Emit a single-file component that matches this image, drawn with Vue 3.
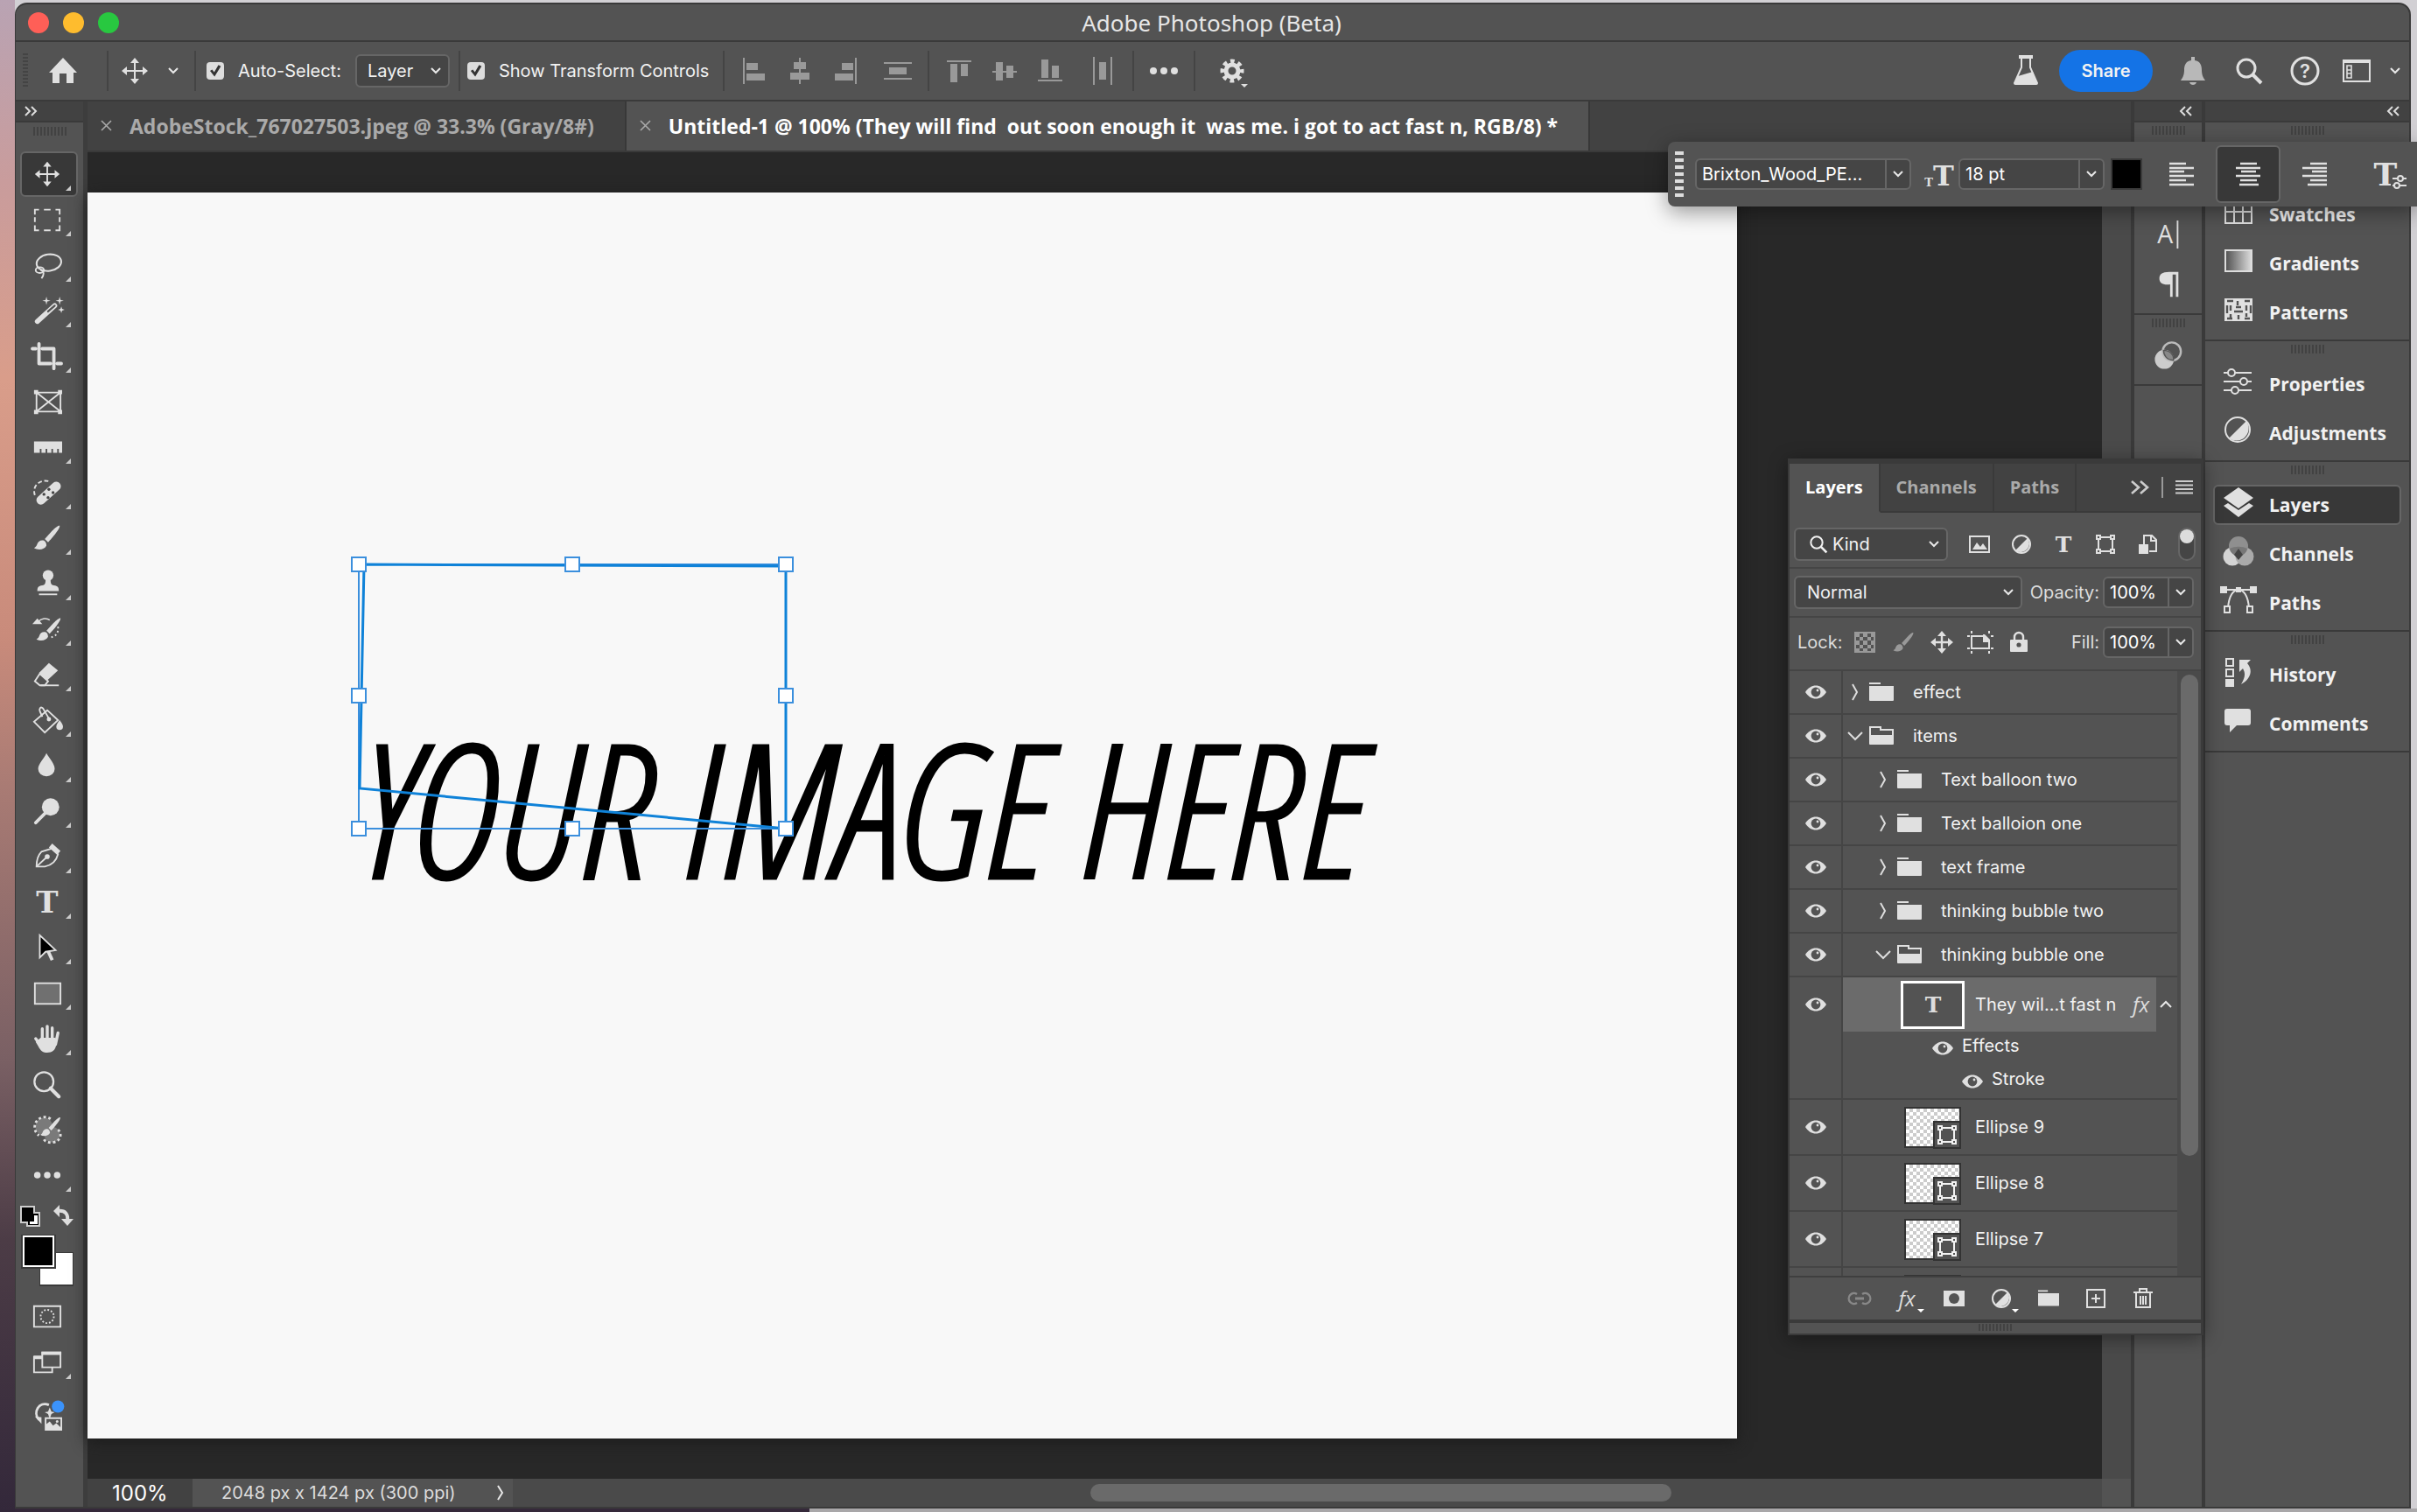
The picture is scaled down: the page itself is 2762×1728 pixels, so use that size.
<template>
  <div class="desktop">
    <div class="window">
      <!-- title bar -->
      <header class="titlebar">
        <div class="lights">
          <button class="light red" aria-label="Close"></button>
          <button class="light yellow" aria-label="Minimise"></button>
          <button class="light green" aria-label="Zoom"></button>
        </div>
        <h1>Adobe Photoshop (Beta)</h1>
        <div class="lights-spacer"></div>
      </header>

      <!-- options bar -->
      <div class="options">
        <span class="vgrip"></span>
        <div class="group home">
          <button class="icon-btn" aria-label="Home"><svg viewBox="0 0 36 36" v-html="icons.home"></svg></button>
        </div>
        <div class="group current">
          <svg class="icon" viewBox="0 0 36 36" v-html="icons.move"></svg>
          <button class="chev-btn" aria-label="Tool presets"><svg class="chev" viewBox="0 0 16 16" v-html="icons.down"></svg></button>
        </div>
        <div class="group auto">
          <input id="auto" type="checkbox" class="check" v-model="autoSelect">
          <label for="auto">Auto-Select:</label>
          <span class="select layer-select">
            <select aria-label="Auto-select target"><option>Layer</option></select>
            <svg class="chev" viewBox="0 0 16 16" v-html="icons.down"></svg>
          </span>
        </div>
        <div class="group transform">
          <input id="controls" type="checkbox" class="check" v-model="showControls">
          <label for="controls">Show Transform Controls</label>
        </div>
        <div v-for="(set, i) in alignSets" :key="i" class="group aligns">
          <button v-for="name in set" :key="name" class="icon-btn dim" :aria-label="name">
            <svg viewBox="0 0 36 36" v-html="icons[name]"></svg>
          </button>
        </div>
        <div class="group more">
          <button class="icon-btn" aria-label="More"><svg viewBox="0 0 36 36" v-html="icons.dots"></svg></button>
        </div>
        <button class="icon-btn gear" aria-label="Settings"><svg viewBox="0 0 36 36" v-html="icons.gear"></svg></button>

        <div class="account">
          <button class="icon-btn" aria-label="Beta feedback"><svg viewBox="0 0 36 36" v-html="icons.flask"></svg></button>
          <button class="share">Share</button>
          <button class="icon-btn bell" aria-label="Notifications"><svg viewBox="0 0 36 36" v-html="icons.bell"></svg></button>
          <button class="icon-btn" aria-label="Search"><svg viewBox="0 0 36 36" v-html="icons.search"></svg></button>
          <button class="icon-btn" aria-label="Help"><svg viewBox="0 0 36 36" v-html="icons.help"></svg></button>
          <button class="icon-btn space" aria-label="Workspace"><svg viewBox="0 0 36 36" v-html="icons.workspace"></svg></button>
          <svg class="chev" viewBox="0 0 16 16" v-html="icons.down"></svg>
        </div>
      </div>

      <div class="body">
        <!-- tools -->
        <aside class="tools">
          <div class="dock-head"><svg class="double" viewBox="0 0 16 16" v-html="icons.right2"></svg></div>
          <span class="grip"></span>
          <nav class="tool-list">
            <button
              v-for="tool in tools"
              :key="tool.name"
              :class="['tool', { active: tool.name === currentTool, corner: tool.more }]"
              :aria-label="tool.name"
              @click="currentTool = tool.name"
            >
              <svg viewBox="0 0 36 36" v-html="icons[tool.name]"></svg>
            </button>
          </nav>
          <div class="colors">
            <svg viewBox="0 0 76 100" v-html="icons.colors"></svg>
          </div>
          <button class="tool" aria-label="Quick mask"><svg viewBox="0 0 36 36" v-html="icons.quickmask"></svg></button>
          <button class="tool corner" aria-label="Screen mode"><svg viewBox="0 0 36 36" v-html="icons.screen"></svg></button>
          <button class="tool gen" aria-label="Generate image"><svg viewBox="0 0 36 36" v-html="icons.generate"></svg></button>
        </aside>

        <!-- document -->
        <main class="document">
          <div class="tabs">
            <button v-for="doc in docs" :key="doc.title" :class="['tab', { active: doc.active }]">
              <svg class="close" viewBox="0 0 16 16" v-html="icons.close"></svg>
              <span>{{ doc.title }}</span>
            </button>
          </div>
          <div class="viewport">
            <div class="stage">
              <div class="artboard">
                <p class="headline">YOUR IMAGE HERE</p>
                <svg v-if="showControls" class="transform-box" viewBox="0 0 510 324">
                  <g fill="none" stroke="#3b8fdd" stroke-width="2">
                    <path d="M10 10H498V312H10Z" />
                    <path stroke="#0f82d8" stroke-width="3" d="M16 10L498 12V312M16 10L11 266L498 312" />
                    <rect v-for="h in handles" :key="h.join()" :x="h[0] - 8" :y="h[1] - 8" width="16" height="16" fill="#fff" />
                  </g>
                </svg>
              </div>
            </div>
            <div class="vscroll"></div>
          </div>
          <footer class="status">
            <span class="zoom">100%</span>
            <span class="info">
              2048 px x 1424 px (300 ppi)
              <svg class="chev" viewBox="0 0 16 16" v-html="icons.next"></svg>
            </span>
            <span class="hscroll"><span class="hthumb"></span></span>
            <span class="scroll-corner"></span>
          </footer>
        </main>

        <!-- collapsed docks -->
        <aside class="dock narrow">
          <div class="dock-head end"><svg class="double" viewBox="0 0 16 16" v-html="icons.left2"></svg></div>
          <section class="type-panels">
            <span class="grip"></span>
            <button class="mini" aria-label="Character"><svg viewBox="0 0 36 36" v-html="icons.character"></svg></button>
            <button class="mini" aria-label="Paragraph"><svg viewBox="0 0 36 36" v-html="icons.paragraph"></svg></button>
          </section>
          <section>
            <span class="grip"></span>
            <button class="mini" aria-label="Libraries"><svg viewBox="0 0 36 36" v-html="icons.circles"></svg></button>
          </section>
        </aside>
        <aside class="dock wide">
          <div class="dock-head end"><svg class="double" viewBox="0 0 16 16" v-html="icons.left2"></svg></div>
          <section v-for="(section, i) in panels" :key="i" :class="{ first: i === 0 }">
            <span class="grip"></span>
            <button
              v-for="panel in section"
              :key="panel"
              :class="['panel-btn', { active: panel === currentPanel }]"
              @click="currentPanel = panel"
            >
              <svg viewBox="0 0 36 36" v-html="icons[panel]"></svg>
              <span>{{ panel }}</span>
            </button>
          </section>
        </aside>
      </div>

      <!-- layers panel -->
      <section class="layers">
        <div class="layer-tabs">
          <button v-for="tab in layerTabs" :key="tab" :class="{ active: tab === 'Layers' }">{{ tab }}</button>
          <div class="panel-menu">
            <svg class="collapse" viewBox="0 0 24 24" v-html="icons.collapse"></svg>
            <span class="bar"></span>
            <svg class="burger" viewBox="0 0 24 24" v-html="icons.burger"></svg>
          </div>
        </div>
        <div class="row kind">
          <span class="select kind-select">
            <svg class="lens" viewBox="0 0 36 36" v-html="icons.search"></svg>
            <select aria-label="Filter type"><option>Kind</option></select>
            <svg class="chev" viewBox="0 0 16 16" v-html="icons.down"></svg>
          </span>
          <div class="filters">
            <button v-for="f in filters" :key="f" class="small-btn" :aria-label="f">
              <svg viewBox="0 0 24 24" v-html="icons[f]"></svg>
            </button>
          </div>
          <button class="toggle" aria-label="Filter on or off"></button>
        </div>
        <div class="row blend">
          <span class="select blend-select">
            <select aria-label="Blend mode"><option>Normal</option></select>
            <svg class="chev" viewBox="0 0 16 16" v-html="icons.down"></svg>
          </span>
          <label for="opacity">Opacity:</label>
          <span class="combo percent">
            <input id="opacity" type="text" v-model="opacity">
            <button aria-label="Opacity slider"><svg class="chev" viewBox="0 0 16 16" v-html="icons.down"></svg></button>
          </span>
        </div>
        <div class="row lock">
          <span class="lock-label">Lock:</span>
          <div class="locks">
            <button v-for="l in locks" :key="l" class="small-btn" :aria-label="l">
              <svg viewBox="0 0 24 24" v-html="icons[l]"></svg>
            </button>
          </div>
          <label for="fill">Fill:</label>
          <span class="combo percent">
            <input id="fill" type="text" v-model="fill">
            <button aria-label="Fill slider"><svg class="chev" viewBox="0 0 16 16" v-html="icons.down"></svg></button>
          </span>
        </div>

        <div class="list-wrap">
          <ul class="list">
            <li v-for="layer in layers" :key="layer.name" :class="['layer', layer.type, { nested: layer.nested }]">
              <button class="eye-cell" :aria-label="'Toggle ' + layer.name"><svg class="eye" viewBox="0 0 24 16" v-html="icons.eye"></svg></button>
              <div v-if="layer.type === 'folder'" class="layer-main">
                <svg class="arrow" viewBox="0 0 20 20" v-html="layer.open ? icons.open : icons.shut"></svg>
                <svg class="folder-icon" viewBox="0 0 28 24" v-html="layer.open ? icons.folderOpen : icons.folder"></svg>
                <span>{{ layer.name }}</span>
              </div>
              <div v-else-if="layer.type === 'text'" class="text-layer">
                <div class="text-head">
                  <div class="selected">
                    <span class="text-thumb"><svg viewBox="0 0 24 24" v-html="icons.letter"></svg></span>
                    <span class="name">{{ layer.name }}</span>
                    <i class="fx">fx</i>
                  </div>
                  <svg class="chev" viewBox="0 0 16 16" v-html="icons.up"></svg>
                </div>
                <div class="effect"><svg class="eye" viewBox="0 0 24 16" v-html="icons.eye"></svg>Effects</div>
                <div class="effect sub"><svg class="eye" viewBox="0 0 24 16" v-html="icons.eye"></svg>Stroke</div>
              </div>
              <div v-else class="layer-main">
                <span class="thumb"><span class="badge"><svg viewBox="0 0 24 24" v-html="icons.shape"></svg></span></span>
                <span>{{ layer.name }}</span>
              </div>
            </li>
            <li class="layer shape">
              <span class="eye-cell"></span>
              <div class="layer-main"><span class="thumb"></span></div>
            </li>
          </ul>
          <div class="track"><span class="thumb-bar"></span></div>
        </div>

        <div class="layer-actions">
          <button class="small-btn faint" aria-label="Link layers"><svg viewBox="0 0 24 24" v-html="icons.link"></svg></button>
          <button class="small-btn fx-btn menu" aria-label="Layer style"><i class="fx">fx</i></button>
          <button class="small-btn" aria-label="Add mask"><svg viewBox="0 0 24 24" v-html="icons.mask"></svg></button>
          <button class="small-btn menu" aria-label="Adjustment layer"><svg viewBox="0 0 24 24" v-html="icons.half"></svg></button>
          <button class="small-btn" aria-label="New group"><svg viewBox="0 0 28 24" v-html="icons.folder"></svg></button>
          <button class="small-btn" aria-label="New layer"><svg viewBox="0 0 24 24" v-html="icons.plus"></svg></button>
          <button class="small-btn" aria-label="Delete layer"><svg viewBox="0 0 24 24" v-html="icons.trash"></svg></button>
        </div>
        <div class="resize"><span class="grip"></span></div>
      </section>
    </div>

    <!-- contextual type bar -->
    <div class="typebar">
      <span class="handle"></span>
      <span class="combo font">
        <input type="text" aria-label="Font family" v-model="font">
        <button aria-label="Font list"><svg class="chev" viewBox="0 0 16 16" v-html="icons.down"></svg></button>
      </span>
      <svg class="icon tt" viewBox="0 0 32 36" v-html="icons.size"></svg>
      <span class="combo size">
        <input type="text" aria-label="Font size" v-model="size">
        <button aria-label="Size list"><svg class="chev" viewBox="0 0 16 16" v-html="icons.down"></svg></button>
      </span>
      <button class="swatch" aria-label="Text colour"></button>
      <button class="para" aria-label="Align left"><svg viewBox="0 0 36 36" v-html="icons.textLeft"></svg></button>
      <button class="para active" aria-label="Align centre"><svg viewBox="0 0 36 36" v-html="icons.textCenter"></svg></button>
      <button class="para" aria-label="Align right"><svg viewBox="0 0 36 36" v-html="icons.textRight"></svg></button>
      <button class="para last" aria-label="Type settings"><svg viewBox="0 0 40 36" v-html="icons.typeSettings"></svg></button>
    </div>
  </div>
</template>

<script setup>
import { ref } from "vue";

//state
const autoSelect = ref(true);
const showControls = ref(true);
const currentTool = ref("move");
const currentPanel = ref("Layers");
const opacity = ref("100%");
const fill = ref("100%");
const font = ref("Brixton_Wood_PE...");
const size = ref("18 pt");

const docs = [
  { title: "AdobeStock_767027503.jpeg @ 33.3% (Gray/8#)", active: false },
  { title: "Untitled-1 @ 100% (They will find  out soon enough it  was me. i got to act fast n, RGB/8) *", active: true },
];

const alignSets = [
  ["alignLeft", "alignCenter", "alignRight", "distributeV"],
  ["alignTop", "alignMiddle", "alignBottom", "distributeH"],
];

const tools = [
  { name: "move", more: true },
  { name: "marquee", more: true },
  { name: "lasso", more: true },
  { name: "wand", more: true },
  { name: "crop", more: true },
  { name: "frame", more: false },
  { name: "ruler", more: true },
  { name: "heal", more: true },
  { name: "brush", more: true },
  { name: "stamp", more: true },
  { name: "historyBrush", more: true },
  { name: "eraser", more: true },
  { name: "bucket", more: true },
  { name: "drop", more: true },
  { name: "dodge", more: true },
  { name: "pen", more: true },
  { name: "type", more: true },
  { name: "arrow", more: true },
  { name: "rectangle", more: true },
  { name: "hand", more: true },
  { name: "magnifier", more: false },
  { name: "selectBrush", more: false },
  { name: "dots", more: true },
];

const panels = [
  ["Swatches", "Gradients", "Patterns"],
  ["Properties", "Adjustments"],
  ["Layers", "Channels", "Paths"],
  ["History", "Comments"],
];

const layerTabs = ["Layers", "Channels", "Paths"];
const filters = ["image", "half", "letter", "shape", "smart"];
const locks = ["checker", "lockBrush", "lockMove", "lockBoard", "padlock"];

const layers = [
  { name: "effect", type: "folder" },
  { name: "items", type: "folder", open: true },
  { name: "Text balloon two", type: "folder", nested: true },
  { name: "Text balloion one", type: "folder", nested: true },
  { name: "text frame", type: "folder", nested: true },
  { name: "thinking bubble two", type: "folder", nested: true },
  { name: "thinking bubble one", type: "folder", nested: true, open: true },
  { name: "They wil...t fast n", type: "text" },
  { name: "Ellipse 9", type: "shape" },
  { name: "Ellipse 8", type: "shape" },
  { name: "Ellipse 7", type: "shape" },
];

const handles = [
  [10, 10], [254, 10], [498, 10],
  [10, 160], [498, 160],
  [10, 312], [254, 312], [498, 312],
];

const line = (d, w = 2, extra = "") =>
  `<path d="${d}" fill="none" stroke="currentColor" stroke-width="${w}" ${extra}/>`;
const solid = (d, extra = "") => `<path d="${d}" fill="currentColor" ${extra}/>`;
const slab = (x, y, s) =>
  `<text x="${x}" y="${y}" font-size="${s}" font-family="DejaVu Serif, serif" font-weight="700" text-anchor="middle" fill="currentColor">T</text>`;
const round = 'stroke-linecap="round" stroke-linejoin="round"';

const brushShape =
  solid("M33 3c-1-1-5 2-9 6l-9 10 4 4c5-5 15-17 14-20z") +
  solid("M14 21c-4-1-7 1-8 4-1 3-2 4-4 5 5 3 13 2 15-3 0-3-1-5-3-6z");

const halfCircle = (c, r) =>
  `<circle cx="${c}" cy="${c}" r="${r}" fill="none" stroke="currentColor" stroke-width="2"/>` +
  solid(`M${c + r * 0.7} ${c - r * 0.7}A${r} ${r} 0 0 1 ${c - r * 0.7} ${c + r * 0.7}Z`);

const icons = {
  //chevrons
  down: line("M3 5l5 5 5-5", 2),
  up: line("M2 11l6-6 6 6", 2),
  next: line("M5 0l5 8-5 8", 2),
  close: line("M2 2l11 11M13 2L2 13", 1.6),
  right2: line("M2 3l5 5-5 5M9 3l5 5-5 5", 2),
  left2: line("M6 3L1 8l5 5M13 3L8 8l5 5", 2),
  collapse: line("M2 5l8 7-8 7M12 5l8 7-8 7", 2.6),
  burger: line("M2 5h20M2 9.500h20M2 14h20M2 18.500h20", 2),
  open: line("M2 6l8 8 8-8", 2),
  shut: line("M7 1l5 9-5 9", 2),

  //options bar
  home: solid("M18 3L2 20h4v12h8V21h8v11h8V20h4z"),
  move: line("M18 6v24M6 18h24", 2) + solid("M18 3l5 6H13zM18 33l5-6H13zM3 18l6-5v10zM33 18l-6-5v10z"),
  alignLeft: line("M6 3v30", 2) + solid("M9 9h13v8H9zM9 21h21v8H9z"),
  alignCenter: line("M18 3v30", 2) + solid("M11 8h14v8H11zM7 20h22v8H7z"),
  alignRight: line("M30 3v30", 2) + solid("M14 9h13v8H14zM6 21h21v8H6z"),
  distributeV: line("M2 9h32M2 27h32", 2) + solid("M8 14h20v8H8z"),
  alignTop: line("M4 7h28", 2) + solid("M8 10h8v21H8zM20 10h8v14h-8z"),
  alignMiddle: line("M4 19h28", 2) + solid("M8 8h8v21H8zM20 12h8v14h-8z"),
  alignBottom: line("M4 29h28", 2) + solid("M8 5h8v21H8zM20 12h8v14h-8z"),
  distributeH: line("M8 2v32M28 2v32", 2) + solid("M14 8h8v20h-8z"),
  dots: '<g fill="currentColor"><circle cx="6" cy="18" r="4"/><circle cx="18" cy="18" r="4"/><circle cx="30" cy="18" r="4"/></g>',
  gear:
    '<circle cx="18" cy="18" r="7" fill="none" stroke="currentColor" stroke-width="5"/>' +
    '<circle cx="18" cy="18" r="11" fill="none" stroke="currentColor" stroke-width="5" stroke-dasharray="4.600 4.040" stroke-dashoffset="2.300"/>' +
    '<path d="M28 33h8l-4 4z" fill="currentColor"/>',
  flask: line("M13 3v11L5 32a1 1 0 0 0 1 1h24a1 1 0 0 0 1-1L23 14V3", 2) + line("M10 2h16", 4) + solid("M9 24l17-5 5 14H5z"),
  bell: solid("M16 2h4v4c6 1 8 5 8 11 0 6 2 9 4 12H4c2-3 4-6 4-12C8 11 10 7 16 6zM14 31h8c-1 4-7 4-8 0z"),
  search: '<circle cx="15" cy="15" r="10" fill="none" stroke="currentColor" stroke-width="3"/>' + line("M22 22l10 10", 4),
  help:
    '<circle cx="18" cy="18" r="15" fill="none" stroke="currentColor" stroke-width="3"/>' +
    '<text x="18" y="26" font-size="22" font-weight="600" font-family="Inter, sans-serif" text-anchor="middle" fill="currentColor">?</text>',
  workspace: line("M3 6h30v24H3z", 2) + solid("M3 5h30v4H3z") + line("M7 12h5v14H7zM7 17h5M7 21h5", 1.6),

  //tools
  marquee: line("M3 12V6h5M14 6h8M28 6h5v6M33 15v6M33 25v6h-5M22 31h-8M8 31H3v-6M3 21v-6", 2),
  lasso:
    '<ellipse cx="20" cy="15" rx="15" ry="10" transform="rotate(-8 20 15)" fill="none" stroke="currentColor" stroke-width="2.200"/>' +
    '<ellipse cx="9" cy="24" rx="5" ry="3.500" fill="none" stroke="currentColor" stroke-width="2"/>' + line("M10 24c5 2 4 6 1 10", 2),
  wand:
    line("M6 31L27 12", 6, round) + '<path d="M19 19l8-7" stroke="#535353" stroke-width="2.400" stroke-linecap="round"/>' +
    solid("M17 1l1 4 4 1-4 1-1 4-1-4-4-1 4-1zM33 1l1 4 4 1-4 1-1 4-1-4-4-1 4-1zM35 13l1 3 3 1-3 1-1 3-1-3-3-1 3-1z"),
  crop: line("M0 9h4M8 3v24h14M12 9h14v24M30 27h5", 4, round),
  frame: line("M5 7h29v23H5zM5 7l29 23M34 7L5 30", 2) + solid("M2 4h5v5H2zM31 4h5v5h-5zM2 28h5v5H2zM31 28h5v5h-5z"),
  ruler: solid("M2 11h34v14h-4v-5h-2v5h-5v-5h-2v5h-5v-5h-2v5h-5v-5h-2v5H2z"),
  heal:
    '<rect x="2" y="13" width="36" height="11" rx="5.500" transform="rotate(-42 20 19)" fill="currentColor"/>' +
    '<g fill="#444"><circle cx="20" cy="14" r="1.800"/><circle cx="25" cy="18" r="1.800"/><circle cx="14" cy="20" r="1.800"/><circle cx="19" cy="24" r="1.800"/></g>' +
    line("M3 21C-1 10 10 0 22 5", 2, 'stroke-dasharray="5 3"'),
  brush: brushShape,
  stamp:
    '<circle cx="19" cy="8" r="6.500" fill="currentColor"/>' + solid("M16 13h6c0 5 1 7 4 7 5 1 6 2 6 7H6c0-5 1-6 6-7 3 0 4-2 4-7z") + line("M8 31h22", 2),
  historyBrush:
    '<g transform="translate(3 2) scale(.94)">' + brushShape + "</g>" + solid("M0 12l6-7 6 7z") + line("M7 9c4-4 10-5 14-2", 1.600) +
    line("M31 15c1 8-3 13-11 13", 2, 'stroke-dasharray="2 3"'),
  eraser:
    solid("M20 4l11 9-13 12-10-9z") + line("M9 17l10 9-4 5H9l-6-5z", 2) + line("M10 31h22", 2),
  bucket:
    line("M18 6l13 12-16 15L2 20z", 2) + line("M20 16L13 4c-3-3-5 0-4 3l3 7", 2) + '<circle cx="20" cy="17" r="2.600" fill="currentColor"/>' +
    solid("M33 18c3 4 4 6 4 8a4 4 0 0 1-8 0c0-2 1-4 4-8z"),
  drop: solid("M17 3c4 7 10 13 10 19a10 9 0 0 1-20 0C7 16 14 10 17 3z"),
  dodge: '<circle cx="22" cy="13" r="10.500" fill="currentColor"/>' + line("M4 32l13-13", 4, round),
  pen:
    line("M24 8l7 7c-2 8-6 13-16 15H5c0-8 2-14 6-18z", 2) + solid("M24 2l10 9-4 5L20 7z") + line("M5 30l13-12", 2) +
    '<circle cx="18" cy="18" r="3" fill="currentColor"/>',
  type: slab(18, 31, 36),
  arrow:
    '<path d="M18 20l6 13" stroke="currentColor" stroke-width="4"/><path d="M9 3v27l7-7 12-2z" fill="#000" stroke="currentColor" stroke-width="2"/>',
  rectangle: '<rect x="3" y="6" width="31" height="25" fill="#707070" stroke="currentColor" stroke-width="2"/>',
  hand:
    line("M12 19V6M18 18V3M24 18V5M31 11l-3 14M4 18l6 8", 3.600, round) + solid("M10 17h18l1 8c-1 7-5 10-11 10-5 0-8-2-11-8l-3-5z"),
  magnifier: '<circle cx="14" cy="15" r="11.500" fill="none" stroke="currentColor" stroke-width="2.400"/>' + line("M22 23l10 10", 4.400, round),
  selectBrush:
    '<circle cx="14" cy="14" r="10.500" fill="#7a7a7a"/><circle cx="24" cy="24" r="9.500" fill="#7a7a7a"/>' +
    line("M22 5A11 11 0 1 0 8 25M14 30c4 6 19 5 20-5 0-4-2-7-5-8", 3, 'stroke-dasharray="3 3"') +
    '<g transform="translate(8 1) scale(.78)">' + brushShape + "</g>",
  colors:
    '<rect x="6" y="10" width="15" height="18" fill="#000" stroke="#ccc" stroke-width="2"/><rect x="13" y="17" width="14" height="15" fill="#000" stroke="#ccc" stroke-width="2"/><rect x="7" y="11" width="13" height="16" fill="#000"/><path d="M21 20h4v10h-9v-3h5z" fill="#fff"/>' +
    '<path d="M48 15c9-1 12 4 11 11" fill="none" stroke="#ddd" stroke-width="4"/><path d="M43 15l7-7v14zM52 24h14l-7 8z" fill="#ddd"/>' +
    '<rect x="27" y="62" width="39" height="39" fill="#3a3a3a"/><rect x="28" y="63" width="37" height="36" fill="#fff"/>' +
    '<rect x="6" y="42" width="40" height="39" fill="#3a3a3a"/><rect x="9" y="44" width="34" height="34" fill="#000" stroke="#fff" stroke-width="2"/>',
  quickmask: line("M2 5h32v25H2z", 2) + '<circle cx="18" cy="17.500" r="8" fill="none" stroke="currentColor" stroke-width="2" stroke-dasharray="2 2.190"/>',
  screen: line("M12 6h22v18H12zM12 11H2v19h22v-6", 2) + solid("M11 5h24v4H11zM2 10h10v4H2z"),
  generate:
    line("M8 25C0 16 8 2 20 7", 3) + solid("M3 21l8 1v8zM21 10l2 5 4 1-4 2-2 6-2-6-4-2 4-1z") + line("M16 23h19v14H16z", 2) +
    solid("M16 36v-5l5-4 4 5 4-3 6 6v2z") + '<circle cx="30" cy="27" r="1.600" fill="currentColor"/><circle cx="31" cy="9" r="7.500" fill="#3b93fb"/>',

  //docks
  character:
    '<text x="14" y="29" font-size="30" font-family="Open Sans, sans-serif" text-anchor="middle" fill="currentColor">A</text>' + line("M29 1v34", 2),
  paragraph: solid("M30 3v30h-3V6h-4v27h-3V18c-9 1-13-2-13-7s3-8 12-8z"),
  circles:
    '<circle cx="13" cy="23" r="11.500" fill="#ccc"/><circle cx="22" cy="13.500" r="11" fill="none" stroke="#bbb" stroke-width="2.600"/><path d="M12 12c8 0 13 6 12 12-8 0-12-6-12-12z" fill="#888" stroke="#555" stroke-width="1.500"/>',
  Swatches: line("M3 5h30v26H3zM3 18h30M13 5v26M23 5v26", 2),
  Gradients:
    '<defs><linearGradient id="grad"><stop offset="0" stop-color="#505050"/><stop offset="1" stop-color="#ddd"/></linearGradient></defs><rect x="3" y="6" width="30" height="24" fill="url(#grad)" stroke="#ddd" stroke-width="2"/>',
  Patterns:
    solid("M2 5h32v26H2z") +
    '<path d="M5 8h7M17 8v5M25 8h6M9 13v6M15 15h6M27 13v6M5 13v9M32 13v9M13 20h10M9 23v4M18 24v5M27 22v4M5 28h6M25 28h6" stroke="#535353" stroke-width="2.400"/>',
  Properties:
    line("M1 8h32M1 18h32M1 28h32", 2) + '<g fill="#535353" stroke="currentColor" stroke-width="2"><circle cx="10" cy="8" r="4"/><circle cx="24" cy="18" r="4"/><circle cx="14" cy="28" r="4"/></g>',
  Adjustments: halfCircle(17, 14),
  Layers: solid("M18 1l17 12-17 12L1 13z") + solid("M6 19l12 8 12-8 5 3-17 13L1 22z"),
  Channels:
    '<circle cx="11" cy="24" r="10.500" fill="#d4d4d4"/><circle cx="25" cy="24" r="10.500" fill="#aaa"/><circle cx="18" cy="12" r="11" fill="#8f8f8f"/><path d="M8 15c6-3 14-3 20 0-1 5-5 8-10 9-5-1-9-4-10-9z" fill="#777"/><path d="M18 15l5 7-5 6-5-6z" fill="#444"/>',
  Paths:
    line("M2 6h32M6 27C7 13 12 6 18 6s11 7 12 21", 2) + solid("M-3 2h8v8h-8zM31 2h8v8h-8zM15 3h6v6h-6z") + '<g fill="#535353" stroke="currentColor" stroke-width="2"><rect x="2" y="25" width="6" height="7"/><rect x="28" y="25" width="6" height="7"/></g>',
  History:
    line("M4 3h8v8H4zM4 15h8v8H4z", 2) + solid("M3 26h10v9H3zM19 4h13l-4 4c7 8 4 18-7 24 5-8 5-13 2-18l-4 4z"),
  Comments: solid("M5 4h24a3 3 0 0 1 3 3v13a3 3 0 0 1-3 3H16l-8 8v-8H5a3 3 0 0 1-3-3V7a3 3 0 0 1 3-3z"),

  //layers panel
  image: line("M1 3h22v18H1z", 2) + solid("M4 18l5-8 4 5 3-4 5 7z"),
  half: halfCircle(12, 10),
  letter: slab(12, 21, 25),
  shape: line("M4 4h16v16H4z", 2) + '<g fill="#535353" stroke="currentColor" stroke-width="2"><rect x="2" y="2" width="4" height="4"/><rect x="18" y="2" width="4" height="4"/><rect x="2" y="18" width="4" height="4"/><rect x="18" y="18" width="4" height="4"/></g>',
  smart: line("M8 12V2h9l5 5v13h-8M16 2v6h6", 2) + solid("M2 12h11v11H2z"),
  checker: '<g color="#999">' + line("M1 1h22v22H1z", 2) + solid("M1 1h5v5H1zM10 1h5v5h-5zM19 1h4v5h-4zM6 6h4v4H6zM15 6h4v4h-4zM1 10h5v5H1zM10 10h5v5h-5zM19 10h4v5h-4zM6 15h4v4H6zM15 15h4v4h-4zM1 19h5v4H1zM10 19h5v4h-5zM19 19h4v4h-4z") + "</g>",
  lockBrush: '<g color="#999" transform="translate(-1 -1) scale(.74)">' + brushShape + "</g>",
  lockMove: line("M12 2v20M2 12h20", 2.400) + solid("M12-1l5 6H7zM12 25l5-6H7zM-1 12l6-5v10zM25 12l-6-5v10z"),
  lockBoard: line("M2 5v14h20V10l-5-5z", 2) + solid("M15 3h2l6 6v3h-8z") + line("M-3 5h3M-3 19h3M2-1v3M2 22v3M22 22v3M24 19h3M22-1v3M24 5h3", 2),
  padlock: solid("M3 9h18a1 1 0 0 1 1 1v12a1 1 0 0 1-1 1H3a1 1 0 0 1-1-1V10a1 1 0 0 1 1-1z") + line("M7 9V6a5 5 0 0 1 10 0v3", 2.400) + '<circle cx="12" cy="15" r="2.600" fill="#535353"/>',
  eye: solid("M0 8C6-2 18-2 24 8 18 18 6 18 0 8z") + '<circle cx="12" cy="8" r="5.400" fill="#535353"/><circle cx="14" cy="6" r="1.400" fill="currentColor"/>',
  folder: solid("M0 1h13v2H0zM0 5h28v16a1 1 0 0 1-1 1H1a1 1 0 0 1-1-1z"),
  folderOpen: line("M1 12V2h12v3h14v7", 2) + solid("M0 11h28v10a1 1 0 0 1-1 1H1a1 1 0 0 1-1-1z"),
  link: line("M9 17a6 6 0 1 1 0-10M15 7a6 6 0 1 1 0 10", 2.400) + line("M7 12h10", 3),
  mask: solid("M0 3h24v18H0z") + '<circle cx="12" cy="12" r="6" fill="#535353"/>',
  plus: line("M2 2h20v20H2zM12 7v10M7 12h10", 2),
  trash: line("M1 5h22M8 4V1h8v3M4 6v16h16V6M9 9v10M12 9v10M15 9v10", 2),

  //type bar
  size: slab(5, 32, 13) + slab(22, 31, 32),
  textLeft: line("M4 6h19M4 11h28M4 15h17M4 20h28M4 25h19M4 30h28", 2.600),
  textCenter: line("M9 6h19M4 11h28M10 15h17M4 20h28M9 25h19M8 30h22", 2.600),
  textRight: line("M13 6h19M4 11h28M15 15h17M4 20h28M13 25h19M10 30h22", 2.600),
  typeSettings: slab(15, 31, 36) + '<g fill="#535353" stroke="#535353" stroke-width="5"><path d="M21 23h20M21 31h20"/></g>' + line("M23 23h16M23 31h16", 2) + '<g fill="#535353" stroke="currentColor" stroke-width="2"><circle cx="32" cy="23" r="3"/><circle cx="28" cy="31" r="3"/></g>',
};
</script>

<style>
body {
  margin: 0;
  overflow: hidden;
}
</style>

<style scoped>
* {
  box-sizing: border-box;
}
.desktop {
  position: relative;
  height: 100vh;
  padding: 3px 7px 4px 17px;
  overflow: hidden;
  font-family: Inter, "Liberation Sans", sans-serif;
  font-size: 20px;
  color: #f2f2f2;
  background:
    linear-gradient(#b9a3b3, #c99c9c 12%, #d99d8a 25%, #c98b7b 42%, #a97b74 52%, #7a6064 70%, #4c3c46 82%, #33283a) left / 17px 100% no-repeat,
    linear-gradient(90deg, #35293a 925px, #a9a7a9 925px) bottom / 100% 4px no-repeat,
    #d2d0d4;
}
button {
  padding: 0;
  border: 0;
  background: none;
  font: inherit;
  color: inherit;
}
svg {
  display: block;
  overflow: visible;
}
.window {
  position: relative;
  display: flex;
  flex-direction: column;
  height: 100%;
  border: 2px solid #3a3a3a;
  border-width: 2px 2px 2px 1px;
  border-radius: 14px 14px 0 0;
  background: #535353;
  overflow: hidden;
}
.icon,
.icon-btn svg {
  width: 36px;
  height: 36px;
}
.icon-btn,
.icon {
  color: #e0e0e0;
}
.chev {
  flex: none;
  width: 16px;
  height: 16px;
  color: #e8e8e8;
}

/* title bar */
.titlebar {
  display: flex;
  align-items: center;
  height: 43px;
  border-bottom: 2px solid #3a3a3a;
}
.titlebar h1 {
  margin: 0;
  font: 400 26px/36px "Noto Sans", "Open Sans", sans-serif;
  color: #e6e6e6;
}
.lights,
.lights-spacer {
  flex: 1;
}
.lights {
  display: flex;
  gap: 16px;
  padding-left: 14px;
}
.lights-spacer { padding-right: 16px; }
.light {
  width: 24px;
  height: 24px;
  border-radius: 50%;
}
.red { background: #ff5f57; }
.yellow { background: #febc2e; }
.green { background: #28c840; }

/* options bar */
.options {
  display: flex;
  align-items: center;
  height: 68px;
  border-bottom: 2px solid #3a3a3a;
  padding-left: 8px;
}
.vgrip {
  width: 6px;
  height: 40px;
  background: repeating-linear-gradient(#444 0 2px, transparent 2px 4px);
}
.group {
  display: flex;
  align-items: center;
  height: 46px;
  border-right: 2px solid #444;
}
.home { padding: 0 32px 0 22px; }
.current { gap: 18px; padding: 0 16px 0 12px; }
.auto { padding: 0 10px 0 12px; }
.transform { padding: 0 16px 0 8px; }
.aligns { gap: 16px; padding: 0 16px; }
.aligns .icon-btn:last-child { margin-left: 8px; }
.more { padding: 0 16px; }
.gear { margin-left: 24px; }
.icon-btn.dim { color: #999; }
.check {
  appearance: none;
  width: 20px;
  height: 20px;
  margin: 0 16px 0 0;
  border-radius: 4px;
  background: #ddd;
}
.check:checked::after {
  content: "";
  display: block;
  width: 20px;
  height: 20px;
  background: #333;
  clip-path: polygon(20% 50%, 32% 42%, 44% 58%, 68% 16%, 82% 24%, 46% 82%);
}
.select {
  display: flex;
  align-items: center;
  height: 38px;
  border: 2px solid #666;
  border-radius: 6px;
  background: #454545;
}
.select select {
  appearance: none;
  flex: 1;
  min-width: 0;
  padding: 0;
  border: 0;
  background: none;
  font: inherit;
  color: inherit;
}
.layer-select {
  width: 108px;
  margin-left: 16px;
  padding: 0 6px 0 12px;
}
.account {
  display: flex;
  align-items: center;
  gap: 28px;
  margin-left: auto;
  padding-right: 8px;
}
.share {
  width: 107px;
  height: 48px;
  margin-left: -8px;
  border-radius: 24px;
  background: #1473e6;
  font-weight: 600;
}
.icon-btn.bell { color: #b8b8b8; }
.icon-btn.space { margin-left: -5px; }
.account .chev { margin-left: -10px; }

/* body */
.body {
  display: flex;
  flex: 1;
  min-height: 0;
}
.dock-head {
  display: flex;
  align-items: center;
  height: 24px;
  padding: 0 9px;
  border-bottom: 2px solid #3a3a3a;
  background: #424242;
}
.dock-head.end { justify-content: flex-end; }
.double {
  width: 16px;
  height: 16px;
  color: #ddd;
}
.grip {
  display: block;
  width: 38px;
  height: 10px;
  margin: 5px auto 6px;
  background: repeating-linear-gradient(90deg, #424242 0 2px, transparent 2px 4px);
}

/* tools */
.tools {
  display: flex;
  flex-direction: column;
  width: 82px;
  border-right: 5px solid #3d3d3d;
}
.tool-list {
  display: flex;
  flex-direction: column;
  padding-top: 12px;
}
.tool {
  position: relative;
  display: flex;
  align-items: center;
  justify-content: center;
  width: 66px;
  height: 52px;
  margin-left: 5px;
  padding-right: 4px;
  border: 2px solid transparent;
  border-radius: 6px;
  color: #e0e0e0;
}
.tool svg {
  width: 34px;
  height: 34px;
}
.tool.active {
  border-color: #666;
  background: #383838;
}
.tool.corner::after {
  content: "";
  position: absolute;
  right: 6px;
  bottom: 5px;
  border: 3px solid;
  border-color: transparent #ccc #ccc transparent;
}
.colors {
  height: 110px;
}
.colors svg {
  width: 76px;
  height: 100px;
}
.tool.gen {
  height: 66px;
}

/* document */
.document {
  display: flex;
  flex: 1;
  flex-direction: column;
  min-width: 0;
}
.tabs {
  display: flex;
  height: 58px;
  border-bottom: 2px solid #3a3a3a;
  background: #424242;
}
.tab {
  display: flex;
  align-items: center;
  gap: 18px;
  padding: 0 35px 0 14px;
  border-right: 2px solid #383838;
  font: 700 23px/30px "Open Sans", "Noto Sans", sans-serif;
  color: #aaa;
  white-space: pre;
}
.tab.active {
  background: #535353;
  color: #fff;
}
.close {
  width: 16px;
  height: 16px;
  color: #aaa;
}
.viewport {
  display: flex;
  flex: 1;
  min-height: 0;
}
.stage {
  display: flex;
  flex: 1;
  padding: 46px 417px 46px 0;
  background: #282828;
}
.artboard {
  position: relative;
  flex: 1;
  background: #f8f8f8;
  box-shadow: 0 4px 16px #1c1c1c;
}
.headline {
  position: absolute;
  left: 308px;
  top: 602px;
  margin: 0;
  font: italic 300 212px/200px "Open Sans Condensed Light", "Roboto Condensed Light", "Roboto Condensed", Lato, sans-serif;
  -webkit-text-stroke: 3px #000;
  color: #000;
  white-space: nowrap;
}
.transform-box {
  position: absolute;
  left: 300px;
  top: 415px;
  width: 510px;
  height: 324px;
}
.vscroll {
  width: 33px;
  background: #4a4a4a;
}
.status {
  display: flex;
  height: 32px;
  background: #4a4a4a;
}
.zoom {
  display: flex;
  align-items: center;
  width: 120px;
  padding-left: 28px;
  background: #424242;
  font-size: 24px;
  color: #fff;
}
.info {
  display: flex;
  align-items: center;
  justify-content: space-between;
  width: 366px;
  padding: 0 6px 0 33px;
  background: #535353;
  color: #ddd;
}
.hscroll {
  flex: 1;
  padding: 6px 492px 6px 660px;
}
.hthumb {
  display: block;
  height: 20px;
  border-radius: 10px;
  background: #6a6a6a;
}
.scroll-corner {
  width: 33px;
  background: #535353;
}

/* docks */
.dock {
  flex: none;
  border-left: 4px solid #3a3a3a;
}
.dock section {
  display: flex;
  flex-direction: column;
  border-bottom: 2px solid #3a3a3a;
}
.narrow { width: 81px; }
.narrow section { padding-bottom: 5px; }
.narrow .grip { margin: 4px auto 3px; }
.narrow .type-panels .grip { margin-bottom: 85px; }
.mini {
  display: flex;
  align-items: center;
  justify-content: center;
  width: 100%;
  height: 57px;
  color: #e0e0e0;
}
.mini svg {
  width: 34px;
  height: 34px;
}
.wide { width: 237px; }
.wide section { padding-bottom: 3px; }
.wide .grip { margin: 4px auto 7px; }
.wide .first .grip { margin-bottom: 63px; }
.panel-btn {
  display: flex;
  align-items: center;
  gap: 17px;
  height: 46px;
  margin: 5px 9px;
  padding-left: 9px;
  border: 2px solid transparent;
  border-radius: 6px;
  font: 700 21px/30px "Open Sans", "Noto Sans", sans-serif;
  color: #f2f2f2;
}
.panel-btn svg {
  flex: none;
  width: 36px;
  height: 36px;
  margin-bottom: 6px;
  color: #e0e0e0;
}
.panel-btn.active {
  border-color: #666;
  background: #383838;
}

/* layers panel */
.layers {
  position: absolute;
  right: 235px;
  top: 519px;
  width: 475px;
  border: 2px solid #3a3a3a;
  border-width: 6px 3px 2px 2px;
  background: #535353;
  box-shadow: 0 4px 20px rgba(0, 0, 0, 0.4);
}
.layer-tabs {
  display: flex;
  height: 56px;
  background: #424242;
}
.layer-tabs button {
  padding: 0 18px;
  border-right: 2px solid #3a3a3a;
  border-bottom: 2px solid #3a3a3a;
  font: 700 20px/30px "Open Sans", "Noto Sans", sans-serif;
  color: #aaa;
}
.layer-tabs button.active {
  border-bottom-color: #535353;
  background: #535353;
  color: #fff;
}
.panel-menu {
  display: flex;
  flex: 1;
  align-items: center;
  justify-content: flex-end;
  gap: 12px;
  padding-right: 7px;
  border-bottom: 2px solid #3a3a3a;
  color: #ccc;
}
.panel-menu svg {
  width: 24px;
  height: 24px;
}
.panel-menu .bar {
  width: 2px;
  height: 24px;
  background: #999;
}
.row {
  display: flex;
  align-items: center;
  padding: 0 8px 0 5px;
  border-bottom: 2px solid #454545;
}
.row label,
.lock-label { color: #ddd; }
.kind {
  height: 64px;
  padding-top: 10px;
  padding-right: 6px;
}
.blend { height: 56px; }
.lock {
  height: 61px;
  padding-bottom: 4px;
}
.kind-select {
  width: 176px;
  padding: 0 6px 0 14px;
  gap: 4px;
}
.lens {
  width: 24px;
  height: 24px;
}
.blend-select {
  width: 261px;
  padding: 0 6px 0 13px;
}
.row label {
  margin: 0 4px 0 auto;
}
.filters {
  display: flex;
  gap: 24px;
  margin-left: 24px;
}
.locks {
  display: flex;
  gap: 20px;
  margin-left: 14px;
}
.lock-label { padding-left: 4px; }
.small-btn {
  width: 24px;
  height: 24px;
  color: #e0e0e0;
}
.small-btn svg {
  width: 24px;
  height: 24px;
}
.toggle {
  width: 20px;
  height: 38px;
  margin-left: auto;
  border: 2px solid #666;
  border-radius: 10px;
  background: #454545;
}
.toggle::before {
  content: "";
  display: block;
  width: 16px;
  height: 16px;
  margin-bottom: 18px;
  border-radius: 50%;
  background: #ddd;
}
.combo {
  display: flex;
  flex: none;
  height: 36px;
  border: 2px solid #666;
  border-radius: 6px;
  background: #454545;
}
.combo input {
  flex: 1;
  min-width: 0;
  padding: 0 6px;
  border: 0;
  outline: 0;
  background: none;
  font: inherit;
  color: #fff;
}
.combo button {
  display: flex;
  align-items: center;
  justify-content: center;
  width: 28px;
  border-left: 2px solid #666;
}
.percent { width: 104px; }

.list-wrap {
  display: flex;
  height: 691px;
  overflow: hidden;
}
.list {
  flex: 1;
  margin: 0;
  padding: 0;
  list-style: none;
}
.layer {
  display: flex;
  height: 50px;
  border-bottom: 2px solid #454545;
}
.layer.text { height: 140px; }
.layer.shape { height: 64px; }
.eye-cell {
  display: flex;
  flex: none;
  align-items: center;
  justify-content: center;
  width: 61px;
  border-right: 2px solid #454545;
}
.eye {
  flex: none;
  width: 26px;
  height: 16px;
  color: #e0e0e0;
}
.text .eye-cell { padding-bottom: 76px; }
.layer-main {
  display: flex;
  flex: 1;
  align-items: center;
  padding-left: 4px;
}
.nested .layer-main { padding-left: 36px; }
.arrow {
  width: 20px;
  height: 20px;
  margin-right: 6px;
  color: #ddd;
}
.folder-icon {
  width: 28px;
  height: 24px;
  margin-right: 22px;
  color: #e0e0e0;
}
.text-layer {
  flex: 1;
}
.text-head {
  display: flex;
  align-items: center;
}
.selected {
  display: flex;
  align-items: center;
  width: 358px;
  height: 62px;
  margin-right: 3px;
  padding-left: 66px;
  background: #6b6b6b;
}
.text-thumb {
  display: flex;
  align-items: center;
  justify-content: center;
  width: 73px;
  height: 55px;
  margin-right: 12px;
  border: 3px solid #fff;
  background: #535353;
}
.text-thumb svg {
  width: 24px;
  height: 24px;
  color: #ddd;
}
.fx {
  font: italic 400 24px/24px "Open Sans", sans-serif;
  color: #ddd;
}
.selected .fx { margin: 0 8px 0 auto; }
.effect {
  display: flex;
  align-items: center;
  gap: 9px;
  height: 38px;
  margin-top: -3px;
  padding-left: 101px;
}
.effect.sub {
  margin-top: 0;
  padding-left: 135px;
}
.effect .eye { margin-top: 6px; }
.shape .layer-main { padding-left: 70px; }
.thumb {
  position: relative;
  width: 65px;
  height: 47px;
  margin-right: 16px;
  border: 2px solid #333;
  background: repeating-conic-gradient(#ccc 0 25%, #fff 0 50%) 0 0 / 8px 8px;
}
.badge {
  position: absolute;
  right: -2px;
  bottom: -3px;
  display: flex;
  align-items: center;
  justify-content: center;
  width: 32px;
  height: 32px;
  border: 2px solid #333;
  background: #535353;
}
.badge svg {
  width: 24px;
  height: 24px;
}
.track {
  width: 27px;
  padding: 4px 3px 0 4px;
  background: #4a4a4a;
}
.thumb-bar {
  display: block;
  width: 20px;
  height: 550px;
  border-radius: 10px;
  background: #6a6a6a;
}
.layer-actions {
  display: flex;
  align-items: center;
  gap: 30px;
  height: 50px;
  padding-left: 68px;
  border-top: 2px solid #3f3f3f;
}
.small-btn.faint { color: #888; }
.menu { position: relative; }
.menu::after {
  content: "";
  position: absolute;
  right: -8px;
  bottom: -8px;
  border: 4px solid transparent;
  border-top-color: #fff;
}
.resize {
  height: 16px;
  border-top: 4px solid #3a3a3a;
}
.resize .grip {
  height: 8px;
  margin-top: 1px;
}

/* type bar */
.typebar {
  position: absolute;
  right: 0;
  top: 162px;
  display: flex;
  align-items: center;
  width: 856px;
  height: 74px;
  padding-left: 8px;
  border-radius: 8px 0 0 8px;
  background: #535353;
  box-shadow: 0 6px 24px rgba(0, 0, 0, 0.4);
}
.handle {
  flex: none;
  width: 10px;
  height: 52px;
  margin-right: 13px;
  background: repeating-linear-gradient(#ddd 0 4px, transparent 4px 8px);
}
.font { width: 247px; }
.size { width: 167px; }
.icon.tt {
  flex: none;
  width: 32px;
  margin: 0 7px 0 15px;
}
.swatch {
  flex: none;
  width: 36px;
  height: 36px;
  margin: 0 8px 0 7px;
  border: 2px solid #3a3a3a;
  background: #000;
}
.para {
  display: flex;
  flex: none;
  align-items: center;
  justify-content: center;
  width: 74px;
  height: 66px;
  margin-right: 2px;
  border: 2px solid transparent;
  border-radius: 6px;
  color: #e0e0e0;
}
.para svg {
  width: 36px;
  height: 36px;
}
.para.active {
  border-color: #666;
  background: #383838;
}
.para.last {
  width: 62px;
  margin-left: 16px;
}
.para.last svg { width: 40px; }
</style>
